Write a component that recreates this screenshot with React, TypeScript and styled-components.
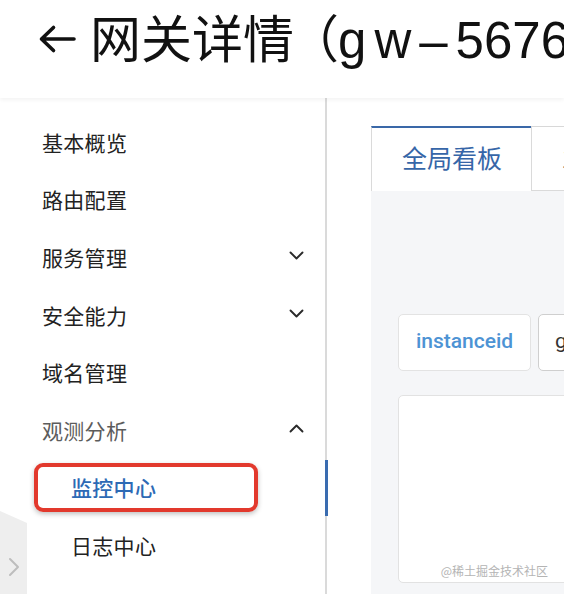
import React from "react";
import styled, { createGlobalStyle } from "styled-components";

const Global = createGlobalStyle`
  html, body { margin: 0; padding: 0; background: #fff; }
  body { font-family: "Noto Sans CJK SC", "Noto Sans", sans-serif; }
  * { box-sizing: border-box; }
`;

const Page = styled.div`
  position: relative;
  width: 564px;
  height: 594px;
  overflow: hidden;
  display: flex;
  flex-direction: column;
  background: #fff;
`;

const Header = styled.header`
  position: relative;
  z-index: 2;
  height: 98px;
  flex: none;
  display: flex;
  align-items: center;
  padding-left: 38px;
  gap: 14px;
  background: #fff;
  box-shadow: 0 2px 4px rgba(0, 0, 0, 0.05);
  white-space: nowrap;
  overflow: hidden;
`;

const Title = styled.h1`
  margin: 0;
  font-family: "Liberation Sans", "Noto Sans CJK SC", sans-serif;
  font-size: 51px;
  font-weight: 400;
  color: #111;
  line-height: 1;
  padding-bottom: 22px;
`;

const Paren = styled.span`
  font-family: "Noto Sans CJK SC", sans-serif;
  margin-left: -6px;
  margin-right: -1px;
`;

const Wide = styled.span`
  letter-spacing: 8px;
`;

const BackIcon = styled.svg`
  flex: none;
  width: 38px;
  height: 30px;
  margin-bottom: 20px;
`;

const Body = styled.div`
  flex: 1;
  display: flex;
  min-height: 0;
`;

const Sidebar = styled.nav`
  width: 327px;
  flex: none;
  border-right: 2px solid #dadada;
  padding-top: 15px;
  display: flex;
  flex-direction: column;
`;

const Item = styled.div<{ $sub?: boolean; $active?: boolean; $muted?: boolean }>`
  position: relative;
  height: 57.6px;
  flex: none;
  display: flex;
  align-items: center;
  justify-content: space-between;
  padding-left: ${(p) => (p.$sub ? "71px" : "42px")};
  padding-right: 21px;
  font-size: 21px;
  font-weight: ${(p) => (p.$active ? 500 : 400)};
  color: ${(p) => (p.$active ? "#2d6ab5" : p.$muted ? "#5c5c5c" : "#222")};
  letter-spacing: 0.3px;
`;

const ActiveBar = styled.span`
  position: absolute;
  right: -3px;
  top: 1px;
  bottom: 0;
  width: 3px;
  background: #3a6cb0;
`;

const Highlight = styled.span`
  position: absolute;
  left: 34px;
  top: 4px;
  width: 224px;
  height: 49px;
  border: 4px solid #e2392d;
  border-radius: 9px;
  box-shadow: 0 2px 5px rgba(0, 0, 0, 0.25);
  pointer-events: none;
`;

const Chevron = styled.svg`
  width: 15px;
  height: 9px;
  margin-top: -2px;
`;

const Collapse = styled.div`
  position: absolute;
  left: 0;
  bottom: 0;
  width: 27px;
  height: 83px;
  background: #eeeeee;
  clip-path: polygon(0 0, 100% 12px, 100% 100%, 0 100%);
  display: flex;
  align-items: center;
  justify-content: center;
  padding-top: 28px;
  z-index: 3;
`;

const Main = styled.main`
  flex: 1;
  min-width: 0;
  display: flex;
  flex-direction: column;
  padding: 28px 0 0 44px;
`;

const Tabs = styled.div`
  display: flex;
  height: 65px;
  flex: none;
`;

const Tab = styled.div<{ $active?: boolean }>`
  width: ${(p) => (p.$active ? "160px" : "120px")};
  flex: none;
  display: flex;
  align-items: center;
  padding-left: 30px;
  padding-bottom: 6px;
  font-size: 25px;
  color: ${(p) => (p.$active ? "#3666a8" : "#666")};
  background: #fff;
  border-top: ${(p) => (p.$active ? "2px solid #3a68a8" : "1.5px solid #d8d8d8")};
  border-left: 1.5px solid #dadada;
  border-bottom: ${(p) => (p.$active ? "none" : "1.5px solid #dadada")};
  white-space: nowrap;
`;

const Panel = styled.section`
  flex: 1;
  background: #f5f6f8;
  padding: 123px 0 0 27px;
  display: flex;
  flex-direction: column;
  gap: 24px;
  overflow: hidden;
`;

const FilterRow = styled.div`
  display: flex;
  gap: 7px;
`;

const Chip = styled.div<{ $label?: boolean }>`
  height: 57px;
  flex: none;
  width: ${(p) => (p.$label ? "133px" : "auto")};
  display: flex;
  align-items: center;
  justify-content: ${(p) => (p.$label ? "center" : "flex-start")};
  padding: 0 16px 3px;
  background: #fff;
  border: 1.5px solid ${(p) => (p.$label ? "#e3e3e3" : "#cfcfcf")};
  border-radius: 5px;
  font-family: Roboto, "Liberation Sans", sans-serif;
  font-size: 21px;
  font-weight: ${(p) => (p.$label ? 500 : 400)};
  color: ${(p) => (p.$label ? "#4d93d4" : "#333")};
  white-space: nowrap;
`;

const ChartCard = styled.div`
  height: 188px;
  width: 200px;
  flex: none;
  background: #fff;
  border: 1.5px solid #e2e2e2;
  border-radius: 5px;
`;

const Watermark = styled.span`
  position: absolute;
  right: 16px;
  bottom: 15px;
  font-size: 12px;
  color: #b4b4b4;
  z-index: 4;
`;

const Down = () => (
  <Chevron viewBox="0 0 15 9">
    <path d="M1.5 1.5 L7.5 7.5 L13.5 1.5" fill="none" stroke="#2a2a2a" strokeWidth="1.9" strokeLinecap="round" strokeLinejoin="round" />
  </Chevron>
);

const Up = () => (
  <Chevron viewBox="0 0 15 9">
    <path d="M1.5 7.5 L7.5 1.5 L13.5 7.5" fill="none" stroke="#2a2a2a" strokeWidth="1.9" strokeLinecap="round" strokeLinejoin="round" />
  </Chevron>
);

export default function App() {
  return (
    <Page>
      <Global />
      <Header>
        <BackIcon viewBox="0 0 38 30">
          <path d="M36 15 H4 M15.5 3.5 L3.5 15 L15.5 26.5" fill="none" stroke="#111" strokeWidth="3.6" strokeLinecap="round" strokeLinejoin="round" />
        </BackIcon>
        <Title>
          网关详情<Paren>（</Paren><Wide>gw–</Wide>5676012345)
        </Title>
      </Header>
      <Body>
        <Sidebar>
          <Item>基本概览</Item>
          <Item>路由配置</Item>
          <Item>服务管理<Down /></Item>
          <Item>安全能力<Down /></Item>
          <Item>域名管理</Item>
          <Item $muted>观测分析<Up /></Item>
          <Item $sub $active>
            监控中心
            <ActiveBar />
            <Highlight />
          </Item>
          <Item $sub>日志中心</Item>
        </Sidebar>
        <Main>
          <Tabs>
            <Tab $active>全局看板</Tab>
            <Tab>业务看板</Tab>
          </Tabs>
          <Panel>
            <FilterRow>
              <Chip $label>instanceid</Chip>
              <Chip>gw-5676012345</Chip>
            </FilterRow>
            <ChartCard />
          </Panel>
        </Main>
      </Body>
      <Collapse>
        <svg width="12" height="20" viewBox="0 0 12 20">
          <path d="M2 2 L10 10 L2 18" fill="none" stroke="#bdbdbd" strokeWidth="2" strokeLinecap="round" strokeLinejoin="round" />
        </svg>
      </Collapse>
      <Watermark>@稀土掘金技术社区</Watermark>
    </Page>
  );
}
